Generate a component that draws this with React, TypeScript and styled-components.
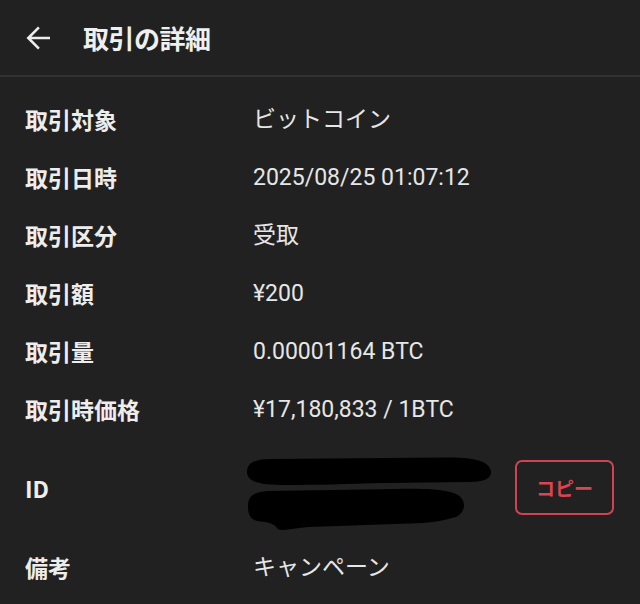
import React from "react";
import styled, { createGlobalStyle } from "styled-components";

const GlobalStyle = createGlobalStyle`
  html, body {
    margin: 0;
    padding: 0;
    background: #212121;
  }
  body {
    font-family: Roboto, "Noto Sans CJK JP", sans-serif;
    color: #ececec;
  }
`;

type Item = {
  label: string;
  value: string;
};

const items: Item[] = [
  { label: "取引対象", value: "ビットコイン" },
  { label: "取引日時", value: "2025/08/25 01:07:12" },
  { label: "取引区分", value: "受取" },
  { label: "取引額", value: "¥200" },
  { label: "取引量", value: "0.00001164 BTC" },
  { label: "取引時価格", value: "¥17,180,833 / 1BTC" },
];

const BackIcon = () => (
  <svg width="36" height="36" viewBox="0 0 24 24" fill="#ededed">
    <path d="M20 11.1H7.6l5.6-5.6L12 4.3 4.3 12l7.7 7.7 1.2-1.2-5.6-5.6H20v-1.8z" />
  </svg>
);

// marker scribble hiding the transaction id
const Redacted = () => (
  <Scribble width="246" height="72" viewBox="0 0 246 72">
    <g transform="translate(0 3)" fill="#000">
      <path d="M1 17 C1 8, 8 4, 26 4 L 200 2.5 C 226 2, 245 6, 245 17 C 245 24, 238 27, 220 27 L 140 28 C 100 29, 70 30, 40 30 C 14 30, 1 27, 1 17 Z" />
      <path d="M2 51 C2 41, 8 37, 22 36 L 150 34 C 192 33, 212 36, 216 44 C 220 50, 218 58, 210 62 C 196 66, 186 67, 178 68 L 62 72 C 42 74, 34 77, 31 73 C 28 68, 20 67, 11 66 C 4 64, 2 59, 2 51 Z" />
    </g>
  </Scribble>
);

export default function App() {
  return (
    <>
      <GlobalStyle />
      <Page>
        <Header>
          <BackButton aria-label="戻る">
            <BackIcon />
          </BackButton>
          <Title>取引の詳細</Title>
        </Header>
        <List>
          {items.map((item) => (
            <Row key={item.label}>
              <Label>{item.label}</Label>
              <Value>{item.value}</Value>
            </Row>
          ))}
          <Row>
            <Label>ID</Label>
            <IdValue>
              <Redacted />
            </IdValue>
            <CopyButton>コピー</CopyButton>
          </Row>
          <Row>
            <Label>備考</Label>
            <Value>キャンペーン</Value>
          </Row>
        </List>
      </Page>
    </>
  );
}

const Page = styled.div`
  width: 640px;
  height: 604px;
  overflow: hidden;
  background: #212121;
`;

const Header = styled.header`
  display: flex;
  align-items: center;
  height: 77px;
  padding-left: 20px;
  box-sizing: border-box;
  border-bottom: 2px solid #323232;
`;

const BackButton = styled.button`
  display: flex;
  align-items: center;
  justify-content: center;
  width: 36px;
  height: 36px;
  padding: 0;
  margin: 0 27px 0 0;
  border: none;
  background: none;
`;

const Title = styled.h1`
  margin: 0;
  font-family: "Noto Sans CJK JP", sans-serif;
  font-size: 26px;
  font-weight: 700;
  color: #efefef;
  letter-spacing: -0.5px;
`;

const List = styled.div`
  display: flex;
  flex-direction: column;
  padding: 13px 26px 0 25px;
`;

const Row = styled.div`
  display: flex;
  align-items: center;
  min-height: 30px;
  padding: 14px 0;
`;

const Label = styled.div`
  width: 228px;
  flex-shrink: 0;
  font-family: "Noto Sans CJK JP", sans-serif;
  font-size: 23px;
  font-weight: 700;
  line-height: 30px;
  color: #ededed;
`;

const Value = styled.div`
  flex: 1;
  box-sizing: border-box;
  height: 30px;
  padding-top: 2px;
  font-family: Roboto, "Noto Sans CJK JP", sans-serif;
  font-size: 23px;
  line-height: 28px;
  color: #e6e6e6;
`;

const IdValue = styled.div`
  flex: 1;
  display: flex;
  margin-left: -7px;
`;

const Scribble = styled.svg`
  overflow: visible;
  display: block;
`;

const CopyButton = styled.button`
  width: 99px;
  height: 55px;
  margin-top: -1px;
  border: 2px solid #d3434f;
  border-radius: 7px;
  background: transparent;
  color: #dc4452;
  font-family: "Noto Sans CJK JP", sans-serif;
  font-size: 19px;
  font-weight: 700;
`;
